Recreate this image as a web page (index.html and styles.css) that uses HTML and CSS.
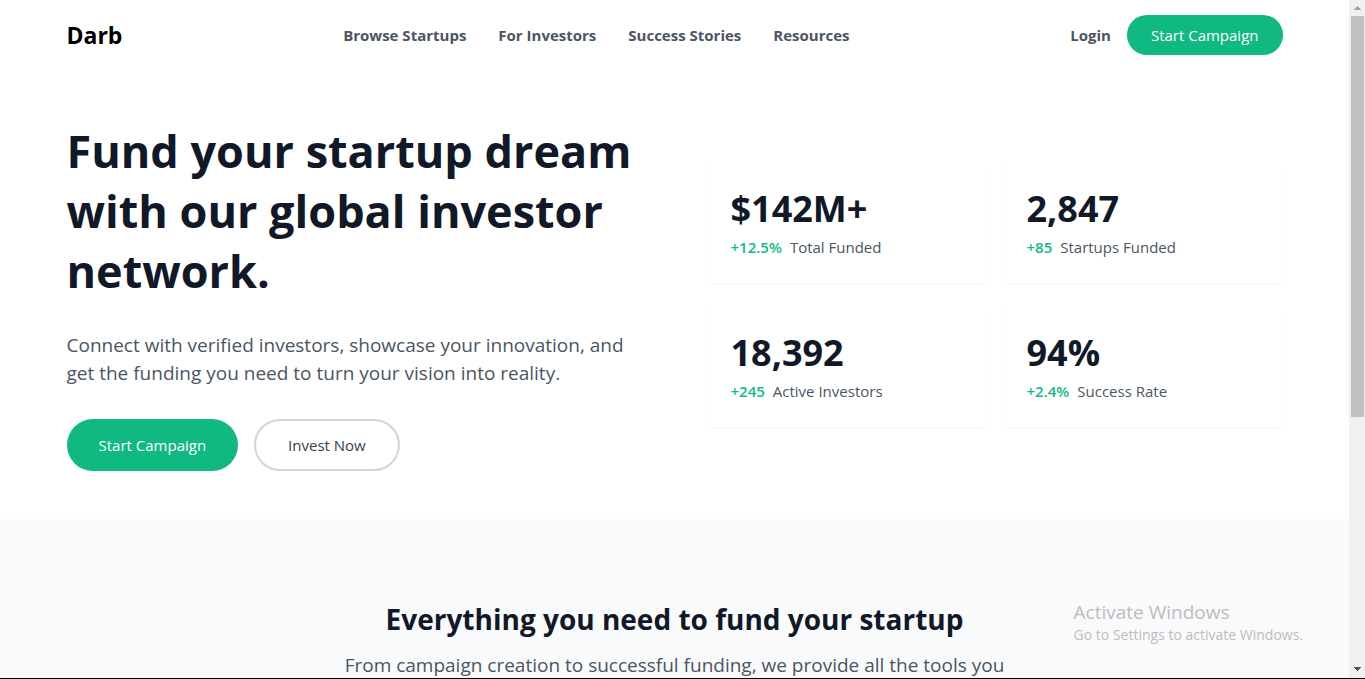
FILE: index.html
```html
<!DOCTYPE html>
<html lang="en">
<head>
<meta charset="utf-8">
<meta name="viewport" content="width=device-width, initial-scale=1">
<title>Darb</title>
<link rel="stylesheet" href="styles.css">
</head>
<body>
<div class="window">
  <div class="page">
    <header class="container header">
      <a class="logo" href="#">Darb</a>
      <nav class="nav">
        <a class="nav-link" href="#">Browse Startups</a>
        <a class="nav-link" href="#">For Investors</a>
        <a class="nav-link" href="#">Success Stories</a>
        <a class="nav-link" href="#">Resources</a>
      </nav>
      <div class="account">
        <a class="nav-link" href="#">Login</a>
        <button class="button button-small" type="button">Start Campaign</button>
      </div>
    </header>
    <main>
      <section class="container hero">
        <div class="hero-copy">
          <h1 class="hero-title">Fund your startup dream with our global investor network.</h1>
          <p class="lead">Connect with verified investors, showcase your innovation, and get the funding you need to turn your vision into reality.</p>
          <div class="actions">
            <button class="button" type="button">Start Campaign</button>
            <button class="button button-outline" type="button">Invest Now</button>
          </div>
        </div>
        <div class="stats">
          <div class="stat">
            <div class="stat-value">$142M+</div>
            <div class="stat-label"><span class="stat-change">+12.5%</span><span>Total Funded</span></div>
          </div>
          <div class="stat">
            <div class="stat-value">2,847</div>
            <div class="stat-label"><span class="stat-change">+85</span><span>Startups Funded</span></div>
          </div>
          <div class="stat">
            <div class="stat-value">18,392</div>
            <div class="stat-label"><span class="stat-change">+245</span><span>Active Investors</span></div>
          </div>
          <div class="stat">
            <div class="stat-value">94%</div>
            <div class="stat-label"><span class="stat-change">+2.4%</span><span>Success Rate</span></div>
          </div>
        </div>
      </section>
      <section class="features">
        <h2 class="features-title">Everything you need to fund your startup</h2>
        <p class="lead">From campaign creation to successful funding, we provide all the tools you</p>
      </section>
    </main>
  </div>
  <div class="scrollbar" aria-hidden="true">
    <svg class="arrow" viewBox="0 0 16 16" shape-rendering="crispEdges"><path fill="#a3a3a3" d="M8 6h1v1h1v1h1v1h1v1H5V9h1V8h1V7h1z"/></svg>
    <div class="track"><div class="thumb"></div></div>
    <svg class="arrow" viewBox="0 0 16 16" shape-rendering="crispEdges"><path fill="#505050" d="M5 5h7v1h-1v1h-1v1H9v1H8V8H7V7H6V6H5z"/></svg>
  </div>
  <div class="watermark">
    <div class="watermark-title">Activate Windows</div>
    <div>Go to Settings to activate Windows.</div>
  </div>
</div>
</body>
</html>
```
FILE: styles.css
```css
* {
  box-sizing: border-box;
}

body {
  margin: 0;
  font-family: "Segoe UI", "Open Sans", "Noto Sans", sans-serif;
  font-size: 15px;
  line-height: 24px;
  color: #4b5563;
  background: #fff;
}

h1, h2, p {
  margin: 0;
}

a {
  color: inherit;
  text-decoration: none;
}

.window {
  position: relative;
  display: flex;
  height: 100vh;
  overflow: hidden;
  border-bottom: 1px solid #000;
}

.page {
  flex: 1;
  min-width: 0;
  height: 100%;
  overflow: hidden;
  display: flex;
  flex-direction: column;
}

main {
  flex: 1;
  display: flex;
  flex-direction: column;
}

.container {
  width: 100%;
  max-width: 1280px;
  margin: 0 auto;
  padding: 0 32px;
}

.header {
  display: flex;
  align-items: center;
  justify-content: space-between;
  padding-top: 15px;
  padding-bottom: 16px;
}

.logo {
  font-size: 23px;
  line-height: 32px;
  font-weight: 700;
  color: #000;
}

.nav {
  display: flex;
  gap: 32px;
}

.nav-link {
  font-weight: 700;
}

.account {
  display: flex;
  align-items: center;
  gap: 16px;
}

.button {
  font: inherit;
  color: #fff;
  background: #10b981;
  border: 0;
  border-radius: 26px;
  padding: 14px 32px;
}

.button-small {
  padding: 8px 24px;
}

.button-outline {
  color: #374151;
  background: #fff;
  border: 2px solid #d1d5db;
  padding: 12px 32px;
}

.hero {
  display: grid;
  grid-template-columns: 1fr 1fr;
  align-items: center;
  gap: 64px;
  padding-top: 48px;
  padding-bottom: 48px;
}

.hero-title {
  font-size: 45px;
  line-height: 60px;
  font-weight: 700;
  color: #111827;
  padding-top: 2px;
  margin-bottom: 30px;
}

.lead {
  font-size: 19px;
  line-height: 28px;
}

.actions {
  display: flex;
  gap: 16px;
  margin-top: 32px;
}

.stats {
  display: grid;
  grid-template-columns: 1fr 1fr;
  gap: 24px 16px;
}

.stat {
  padding: 24px;
  border-radius: 8px;
  background: #fff;
  box-shadow: 0 1px 2px rgba(0, 0, 0, 0.05);
}

.stat-value {
  font-size: 36px;
  line-height: 44px;
  font-weight: 700;
  color: #111827;
  margin-bottom: 4px;
}

.stat-label {
  display: flex;
  gap: 8px;
}

.stat-change {
  font-weight: 600;
  color: #10b981;
}

.features {
  flex: 1 0 auto;
  padding: 80px 32px 0;
  background: #f9fafb;
  text-align: center;
}

.features-title {
  font-size: 28px;
  line-height: 40px;
  font-weight: 700;
  color: #111827;
  margin-bottom: 12px;
}

.scrollbar {
  width: 16px;
  display: flex;
  flex-direction: column;
  background: #f0f0f0;
}

.arrow {
  display: block;
  width: 16px;
  height: 16px;
}

.track {
  flex: 1;
  padding: 0 1px 0 2px;
}

.thumb {
  height: 62%;
  background: #c1c1c1;
}

.watermark {
  position: absolute;
  right: 62px;
  bottom: 32px;
  font-size: 14px;
  line-height: 22px;
  color: #bcbdbf;
}

.watermark-title {
  font-size: 19px;
  line-height: 24px;
}
```
